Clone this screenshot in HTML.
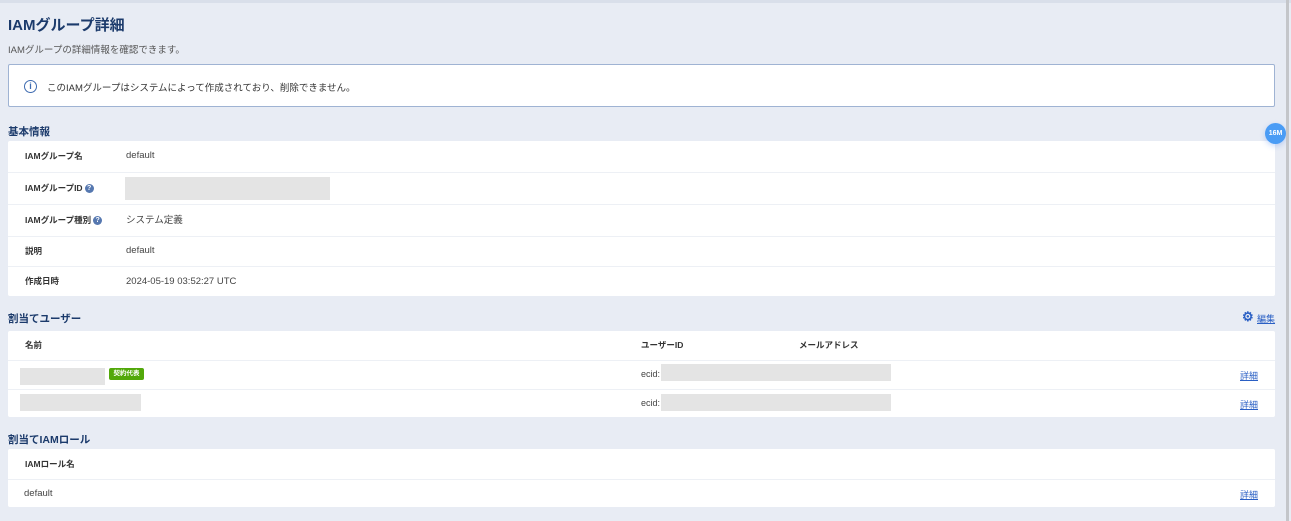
<!DOCTYPE html>
<html><head><meta charset="utf-8"><style>
*{box-sizing:border-box;margin:0;padding:0}
body{width:1291px;height:521px;background:#e8ecf4;font-family:"Liberation Sans","Noto Sans CJK JP",sans-serif;position:relative;overflow:hidden;color:#333}
.top{position:absolute;left:0;top:0;width:1291px;height:3px;background:#d9dfea}
.sb{position:absolute;left:1286px;top:0;width:3px;height:521px;background:#c4c6ca}
.a{position:absolute}
h1{position:absolute;left:8px;top:14px;font-size:15px;color:#1b3a6b;font-weight:bold}
.sub{left:8px;top:42px;font-size:9.5px;color:#555}
.info{left:8px;top:64px;width:1267px;height:43px;background:#fff;border:1px solid #9fb3d3;border-radius:2px}
.info span{position:absolute;left:38px;top:15px;font-size:9.5px;color:#333}
.ic{position:absolute;left:15px;top:15px;width:13px;height:13px;border:1.3px solid #3e6bb0;border-radius:50%;color:#3e6bb0;font-size:9px;text-align:center;line-height:11px;font-weight:bold}
.sh{left:8px;font-size:10.5px;font-weight:bold;color:#1b3a6b}
.card{left:8px;width:1267px;background:#fff;border-radius:2px}
.row{position:absolute;left:0;width:1267px;border-top:1px solid #edf0f5}
.lb{position:absolute;left:17px;font-size:8.5px;font-weight:bold;color:#333}
.v{position:absolute;left:118px;font-size:9.5px;color:#444}
.q{display:inline-block;width:9px;height:9px;border-radius:50%;background:#5678b0;color:#fff;font-size:7px;text-align:center;line-height:9px;vertical-align:1px;margin-left:2px}
.gray{position:absolute;background:#e4e4e4}
.lk{position:absolute;font-size:9px;color:#2a5fc4;text-decoration:underline}
</style></head><body>
<div class="top"></div>
<h1>IAMグループ詳細</h1>
<div class="a sub">IAMグループの詳細情報を確認できます。</div>
<div class="a info"><div class="ic">i</div><span>このIAMグループはシステムによって作成されており、削除できません。</span></div>
<div class="a sh" style="top:124px">基本情報</div>
<div class="a card" style="top:141px;height:155px">
 <div class="lb" style="top:9px">IAMグループ名</div><div class="v" style="top:9px">default</div>
 <div class="row" style="top:31px;height:32px"><div class="lb" style="top:9px">IAMグループID<span class="q">?</span></div><div class="gray" style="left:117px;top:4px;width:205px;height:23px"></div></div>
 <div class="row" style="top:63px;height:32px"><div class="lb" style="top:9px">IAMグループ種別<span class="q">?</span></div><div class="v" style="top:7px">システム定義</div></div>
 <div class="row" style="top:95px;height:30px"><div class="lb" style="top:8px">説明</div><div class="v" style="top:8px">default</div></div>
 <div class="row" style="top:125px;height:30px"><div class="lb" style="top:8px">作成日時</div><div class="v" style="top:9px">2024-05-19 03:52:27 UTC</div></div>
</div>
<div class="a sh" style="top:311px">割当てユーザー</div>
<div class="a" style="left:1242px;top:309px;font-size:13px;font-weight:bold;color:#2a5fc4">⚙</div>
<div class="lk" style="left:1257px;top:312px">編集</div>
<div class="a card" style="top:331px;height:86px">
 <div class="lb" style="top:8px">名前</div><div class="lb" style="left:633px;top:8px">ユーザーID</div><div class="lb" style="left:791px;top:8px">メールアドレス</div>
 <div class="row" style="top:29px;height:29px"><div class="gray" style="left:12px;top:7px;width:85px;height:17px"></div><div class="a" style="left:101px;top:7px;width:35px;height:12px;background:#52a80a;border-radius:2px;color:#fff;font-size:6.5px;font-weight:bold;text-align:center;line-height:12px">契約代表</div><div class="v" style="left:633px;top:8px;font-size:9px">ecid:</div><div class="gray" style="left:653px;top:3px;width:230px;height:17px"></div><div class="lk" style="left:1232px;top:8px">詳細</div></div>
 <div class="row" style="top:58px;height:28px"><div class="gray" style="left:12px;top:4px;width:121px;height:17px"></div><div class="v" style="left:633px;top:8px;font-size:9px">ecid:</div><div class="gray" style="left:653px;top:4px;width:230px;height:17px"></div><div class="lk" style="left:1232px;top:8px">詳細</div></div>
</div>
<div class="a sh" style="top:432px">割当てIAMロール</div>
<div class="a card" style="top:449px;height:58px">
 <div class="lb" style="top:9px">IAMロール名</div>
 <div class="row" style="top:30px;height:28px"><div class="v" style="left:16px;top:8px">default</div><div class="lk" style="left:1232px;top:8px">詳細</div></div>
</div>
<div class="a" style="left:1265px;top:123px;width:21px;height:21px;border-radius:50%;background:#4a9cf5;color:#fff;font-size:7px;font-weight:bold;text-align:center;line-height:21px;box-shadow:0 2px 6px rgba(70,130,240,.3)">16M</div>
<div class="sb"></div>
</body></html>
